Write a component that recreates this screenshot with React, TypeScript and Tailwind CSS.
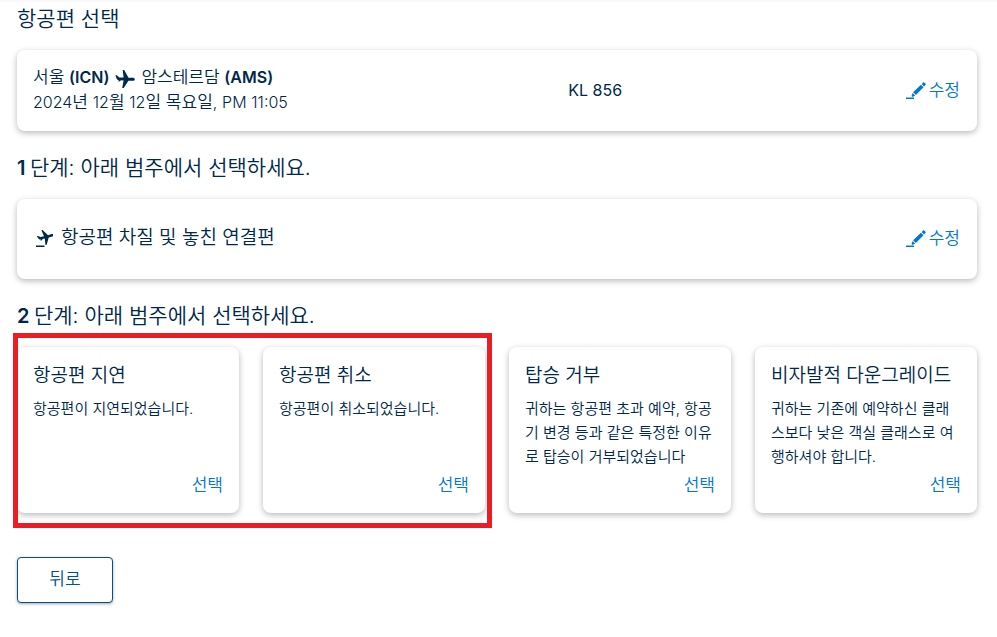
import type { ReactNode } from "react";

const categories = [
  { title: "항공편 지연", text: "항공편이 지연되었습니다." },
  { title: "항공편 취소", text: "항공편이 취소되었습니다." },
  {
    title: "탑승 거부",
    text: "귀하는 항공편 초과 예약, 항공기 변경 등과 같은 특정한 이유로 탑승이 거부되었습니다",
  },
  {
    title: "비자발적 다운그레이드",
    text: "귀하는 기존에 예약하신 클래스보다 낮은 객실 클래스로 여행하셔야 합니다.",
  },
];

const cardShadow = "rounded-lg bg-white shadow-[0_2px_6px_rgba(0,0,0,0.28)]";

const planePath =
  "M19.800 10.300c0-.9-.9-1.500-2-1.500h-4.300L9.200 1H7.700l.9 7.600-4.300-.2L1.900 6.200H.4l1.200 3.300c.2.900.8 1.300 1.700 1.400l.5.1-.6 1.500h1l2-1.300 2.400.3-1.400 7.500h1.500l4.700-7.200h4.400c1.200 0 2-.5 2-1.500Z";

/* Splits Korean and Latin runs so that Latin text is set one step smaller. */
function MixedText({ text }: { text: string }) {
  return (
    <>
      {text.split(/([\x21-\x7e]+)/).map((part, i) =>
        i % 2 === 1 ? (
          <span key={i} className="text-base">
            {part}
          </span>
        ) : (
          part
        ),
      )}
    </>
  );
}

function PlaneIcon() {
  return (
    <svg viewBox="0 0 20 20" className="mt-1 size-5 shrink-0" fill="currentColor" aria-hidden="true">
      <path d={planePath} />
    </svg>
  );
}

function DisruptionIcon() {
  return (
    <svg viewBox="0 0 20 20" className="size-5 shrink-0" fill="currentColor" aria-hidden="true">
      <path transform="translate(12.500 9) rotate(-17) scale(.85) translate(-10 -10)" d={planePath} />
      <path d="M3 17.500h8.500V19H3z" />
    </svg>
  );
}

function PencilIcon() {
  return (
    <svg viewBox="0 0 20 20" className="size-5 shrink-0" fill="currentColor" aria-hidden="true">
      <path d="m15.600 4 1.600-1.600c.3-.3.700-.3 1 0l1.400 1.400c.3.300.3.700 0 1L18 6.400zM14.900 4.700l2.600 2.600-7.600 7.600-2.800-2.600zM6.600 13l2.500 2.400-2.600 1.500-1-.9z" />
      <path d="M0 17.500h8V19H0z" />
    </svg>
  );
}

function EditButton({ label }: { label: string }) {
  return (
    <button type="button" aria-label={label} className="flex items-center gap-[3px] pb-0.5 text-[17px] leading-6 text-[#0078d2]">
      <PencilIcon />
      수정
    </button>
  );
}

function Heading({ children }: { children: ReactNode }) {
  return <h2 className="text-[21px] leading-8">{children}</h2>;
}

function StepHeading({ step }: { step: number }) {
  return (
    <div className="mt-[21px]">
      <Heading>
        <span className="text-xl font-semibold">{step}</span>
        <span className="text-base"> </span>단계: 아래 범주에서 선택하세요.
      </Heading>
    </div>
  );
}

export default function App() {
  return (
    <main className="min-h-screen bg-white pr-5 pb-8 pl-[17px] font-['Inter','Noto_Sans_CJK_KR',sans-serif] font-[350] text-[#00284a]">
      <div className="-mr-5 -ml-[17px] h-[3px] bg-gradient-to-b from-[#f7f7f7] to-white" />
      <Heading>항공편 선택</Heading>

      <section className={`mt-[15px] flex min-h-[81px] items-center pr-[17px] pl-4 ${cardShadow}`}>
        <div className="flex-[536] pb-0.5 text-[17px] leading-[25px]">
          <p className="flex items-center gap-1.5">
            <span>
              서울 <span className="text-base font-semibold">(ICN)</span>
            </span>
            <PlaneIcon />
            <span>
              암스테르담 <span className="text-base font-semibold">(AMS)</span>
            </span>
          </p>
          <p>
            <MixedText text="2024년 12월 12일 목요일, PM 11:05" />
          </p>
        </div>
        <p className="flex-[338] pb-0.5 text-base leading-6 font-normal">KL 856</p>
        <EditButton label="항공편 수정" />
      </section>

      <StepHeading step={1} />

      <section className={`mt-[15px] flex min-h-20 items-center justify-between pr-[17px] pl-4 ${cardShadow}`}>
        <h3 className="flex items-center gap-2 pb-0.5 text-[19px] leading-7">
          <DisruptionIcon />
          항공편 차질 및 놓친 연결편
        </h3>
        <EditButton label="범주 수정" />
      </section>

      <StepHeading step={2} />

      <div className="relative mt-[15px]">
        <ul className="grid grid-cols-4 gap-6">
          {categories.map((c) => (
            <li key={c.title} className={`flex min-h-[166px] flex-col px-4 pt-[15px] pb-4 ${cardShadow}`}>
              <h3 className="text-[19px] leading-7">{c.title}</h3>
              <p className="mt-[7px] text-[15px] leading-6 break-all">{c.text}</p>
              <button
                type="button"
                aria-label={`${c.title} 선택`}
                className="mt-auto self-end text-[17px] leading-6 text-[#0078d2]"
              >
                선택
              </button>
            </li>
          ))}
        </ul>
        <div className="pointer-events-none absolute -top-3.5 right-[calc(50%+5px)] -bottom-[15px] -left-1 border-[5px] border-[#ed1c24]" />
      </div>

      <button
        type="button"
        className="mt-11 h-[46px] w-24 rounded border border-[#00508f] bg-white text-[17px] text-[#00508f] shadow-[0_1px_3px_rgba(0,0,0,0.35)]"
      >
        뒤로
      </button>
    </main>
  );
}
